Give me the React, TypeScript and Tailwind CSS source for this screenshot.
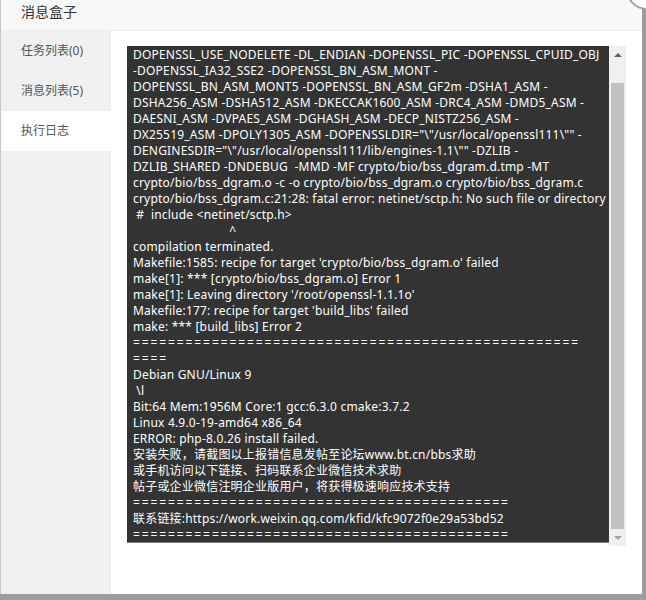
const logLines = [
    'DOPENSSL_USE_NODELETE -DL_ENDIAN -DOPENSSL_PIC -DOPENSSL_CPUID_OBJ',
    '-DOPENSSL_IA32_SSE2 -DOPENSSL_BN_ASM_MONT -',
    'DOPENSSL_BN_ASM_MONT5 -DOPENSSL_BN_ASM_GF2m -DSHA1_ASM -',
    'DSHA256_ASM -DSHA512_ASM -DKECCAK1600_ASM -DRC4_ASM -DMD5_ASM -',
    'DAESNI_ASM -DVPAES_ASM -DGHASH_ASM -DECP_NISTZ256_ASM -',
    'DX25519_ASM -DPOLY1305_ASM -DOPENSSLDIR="\\"/usr/local/openssl111\\"" -',
    'DENGINESDIR="\\"/usr/local/openssl111/lib/engines-1.1\\"" -DZLIB -',
    'DZLIB_SHARED -DNDEBUG  -MMD -MF crypto/bio/bss_dgram.d.tmp -MT',
    'crypto/bio/bss_dgram.o -c -o crypto/bio/bss_dgram.o crypto/bio/bss_dgram.c',
    'crypto/bio/bss_dgram.c:21:28: fatal error: netinet/sctp.h: No such file or directory',
    ' #  include <netinet/sctp.h>',
    '                             ^',
    'compilation terminated.',
    "Makefile:1585: recipe for target 'crypto/bio/bss_dgram.o' failed",
    'make[1]: *** [crypto/bio/bss_dgram.o] Error 1',
    "make[1]: Leaving directory '/root/openssl-1.1.1o'",
    "Makefile:177: recipe for target 'build_libs' failed",
    'make: *** [build_libs] Error 2',
    '='.repeat(51),
    '====',
    'Debian GNU/Linux 9',
    ' \\l',
    'Bit:64 Mem:1956M Core:1 gcc:6.3.0 cmake:3.7.2',
    'Linux 4.9.0-19-amd64 x86_64',
    'ERROR: php-8.0.26 install failed.',
    '安装失败，请截图以上报错信息发帖至论坛www.bt.cn/bbs求助',
    '或手机访问以下链接、扫码联系企业微信技术求助',
    '帖子或企业微信注明企业版用户，将获得极速响应技术支持',
    '='.repeat(43),
    '联系链接:https://work.weixin.qq.com/kfid/kfc9072f0e29a53bd52',
    '='.repeat(43),
];

const tabs = ['任务列表(0)', '消息列表(5)', '执行日志'];

export default function App() {
    return (
        <div className="relative h-[600px] w-[646px] overflow-hidden bg-[#9c9c9c] font-['Noto_Sans','Noto_Sans_CJK_SC',sans-serif]">
            <div className="flex h-[594px] w-[642px] flex-col border-l border-[#c6c6c6] bg-white">
                <div className="h-[31px] shrink-0 border-b border-[#eeeeee] bg-[#f8f8f8] pl-5 text-[14px] leading-[24px] text-[#333]">
                    消息盒子
                </div>

                <div className="flex flex-1">
                    <aside className="w-[110px] shrink-0 bg-[#f0f0f0]">
                        {tabs.map((tab, i) => (
                            <div
                                key={tab}
                                className={
                                    i === 2
                                        ? 'h-10 bg-white pl-5 text-[12px] leading-10 text-[#555]'
                                        : 'h-10 pl-5 text-[12px] leading-10 text-[#555]'
                                }
                            >
                                {tab}
                            </div>
                        ))}
                    </aside>

                    <section className="min-w-0 flex-1 px-4 pt-[15px]">
                        <div className="flex h-[500px] items-start">
                            <div className="h-[497px] min-w-0 flex-1 overflow-hidden border-b border-[#808080] bg-[#333333] pl-[6px] pt-[1px] text-[12px] leading-4 tracking-[0.2px] text-white">
                                {logLines.map((line, i) => (
                                    <div
                                        key={i}
                                        className={
                                            line.startsWith('==')
                                                ? 'h-4 whitespace-pre tracking-[1.9px]'
                                                : 'h-4 whitespace-pre'
                                        }
                                    >
                                        {line}
                                    </div>
                                ))}
                            </div>

                            <div className="flex h-full w-[17px] shrink-0 flex-col bg-[#f0f0f0]">
                                <div className="flex h-[17px] items-center justify-center">
                                    <div className="h-0 w-0 border-x-[4px] border-b-[4px] border-x-transparent border-b-[#606060]" />
                                </div>
                                <div className="flex flex-1 flex-col justify-end px-[2px]">
                                    <div className="h-[446px] bg-[#c1c1c1]" />
                                </div>
                                <div className="flex h-[17px] items-center justify-center">
                                    <div className="h-0 w-0 border-x-[4px] border-t-[4px] border-x-transparent border-t-[#a3a3a3]" />
                                </div>
                            </div>
                        </div>
                    </section>
                </div>
            </div>

            <div className="absolute left-[626px] top-[-32px] h-[42px] w-[42px] rounded-full border-2 border-[#a0a0a0] bg-white" />
        </div>
    );
}
